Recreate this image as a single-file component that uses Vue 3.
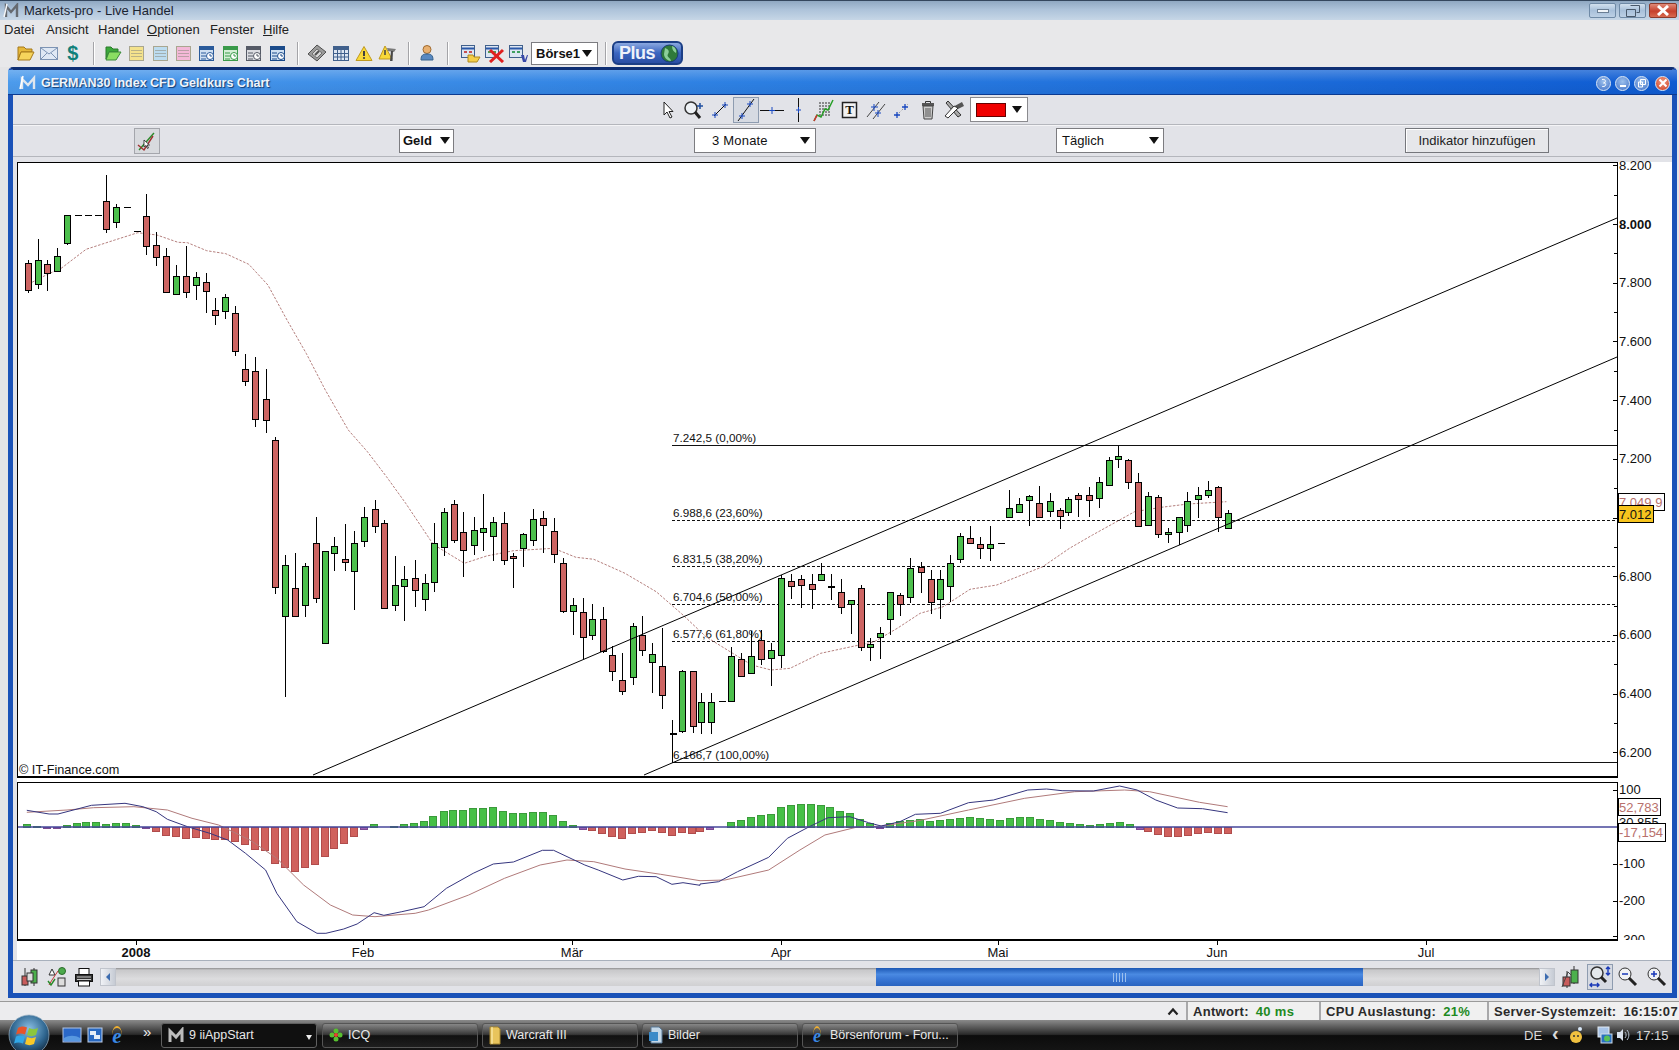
<script setup>
const c5 = [[72,300,310,391,398,0],[98,238,301,373,386,1],[124,300,313,340,392,0],[150,265,287,334,336,1],[176,165,166,250,254,1],[278,45,124,208,218,0],[304,133,142,187,203,1],[382,102,169,259,284,0],[408,216,256,290,317,0],[435,265,289,395,397,0],[461,316,349,401,403,1],[487,258,349,397,413,0],[513,336,352,374,419,1],[537,340,367,394,459,0],[563,415,451,466,494,0],[589,403,412,454,476,1],[615,438,460,572,587,0],[641,582,628,664,677,0],[667,592,634,778,800,0],[694,628,718,781,818,0]]
const c6 = [[617,-130,-119,320,341,0],[639,226,256,409,650,1],[661,220,325,409,409,0],[684,248,259,376,412,1],[707,112,190,355,368,0],[729,213,214,488,490,1],[749,170,199,220,272,1],[772,133,238,245,272,0],[794,153,190,274,390,1],[816,80,112,184,200,1],[839,60,88,139,158,0],[861,121,130,383,386,0],[884,228,314,376,392,1],[906,258,298,319,422,1],[929,240,293,331,380,0],[951,282,310,358,393,1],[973,128,190,307,335,1],[995,85,97,202,227,1],[1016,60,71,181,188,0],[1038,96,157,211,290,0],[1061,112,149,196,224,1],[1083,42,143,157,212,1],[1105,112,127,169,242,1],[1128,97,130,241,254,0],[1150,220,229,235,323,0],[1172,158,163,205,260,1],[1195,87,118,181,197,1],[1217,93,115,136,218,0],[1240,115,154,222,248,0],[1262,234,248,394,400,0],[1283,354,374,394,465,1],[1305,354,395,472,537,0],[1327,372,416,466,480,1],[1350,381,416,514,520,0],[1372,498,526,574,602,0],[1394,518,599,634,644,0],[1417,430,439,592,614,1],[1439,408,466,511,528,0],[1461,490,523,547,640,1],[1484,445,557,646,686,0]]
const c7 = [[58,751,754,934,940,1],[85,754,754,919,940,0],[108,820,845,905,942,1],[134,820,845,905,942,1],[186,682,707,844,846,1],[212,700,716,769,770,0],[238,632,707,760,762,1],[265,630,659,718,734,0],[291,668,691,715,797,1],[317,466,475,706,745,1],[343,462,482,499,537,0],[369,466,476,496,563,0],[396,462,493,508,566,0],[420,430,463,479,482,1],[446,462,497,502,540,1],[472,478,515,562,582,0],[498,540,541,553,642,1],[524,495,505,682,692,0],[550,655,673,682,722,1],[576,622,638,652,716,1],[602,515,517,598,644,1],[628,518,524,553,587,0],[654,415,445,532,550,1],[681,427,440,457,518,0],[707,450,478,547,581,0],[731,450,478,538,596,1],[757,405,428,499,545,1],[783,340,349,418,428,1],[809,318,355,368,370,0],[835,352,371,385,418,0],[861,318,371,385,422,1],[913,210,263,292,293,1],[939,235,253,277,280,1],[965,224,229,241,318,1],[991,198,250,290,292,0],[1018,220,244,274,290,1],[1044,265,271,289,326,0],[1067,232,238,277,287,1],[1093,220,226,238,290,0],[1120,202,226,241,291,0],[1146,172,187,235,263,1],[1172,110,121,196,197,1],[1198,78,109,118,143,1],[1224,118,121,187,207,0],[1250,160,187,319,322,0],[1276,217,229,316,317,1],[1302,225,232,343,355,0],[1328,325,337,343,368,1],[1355,290,292,337,376,1],[1378,217,244,316,335,1],[1405,202,226,238,293,1],[1431,183,211,226,233,1],[1457,197,202,292,335,0],[1483,271,280,323,325,1]]
const toCandle = (f, x0, y0) => ([x, h, t, b, l, g]) => ({
  x: Math.round(x0 + x / f) + 0.5,
  h: Math.round(y0 + h / 3),
  t: Math.round(y0 + t / 3) + 0.5,
  b: Math.round(y0 + b / 3) + 0.5,
  l: Math.round(y0 + l / 3),
  fill: g ? '#4cbf4c' : '#cd6563'
})
const candles = [
  ...c5.map(toCandle(2.613, 0, 160)),
  ...c6.map(toCandle(2.24, 0, 480)),
  ...c7.map(toCandle(2.613, 660, 420))
]
const dashes = [[77.5, 215], [87.5, 215], [97.5, 215], [126.5, 207], [136.5, 231], [721.5, 701], [1000.5, 543]]
  .map(([x, y]) => ({ x, y: y + 0.5 }))
const wick = { x: 672.5, y1: 720, y2: 763, y: 733.5 }

const toPts = (pts, f, x0, y0) => pts.map(([x, y]) => `${(x0 + x / f).toFixed(1)},${(y0 + y / 3).toFixed(1)}`).join(' ')
const maLine = [
  toPts([[75,372],[124,343],[160,325],[225,268],[300,240],[360,218],[410,225],[465,247],[490,248],[540,272],[590,281],[650,313],[700,375],[750,480],[800,580],[850,690],[910,810],[960,875],[1010,950],[1060,1030],[1130,1150]], 2.613, 0, 160),
  toPts([[985,205],[1040,250],[1090,228],[1150,212],[1240,205],[1290,232],[1330,238],[1400,280],[1470,335]], 2.24, 0, 480),
  toPts([[60,585],[120,650],[190,700],[240,735],[290,750],[340,745],[420,700],[500,680],[560,665],[620,625],[680,580],[740,560],[810,508],[880,495],[1000,440],[1070,385],[1130,345],[1240,275],[1310,262],[1380,252],[1480,245]], 2.613, 660, 420)
].join(' ')

const macd = [
  toPts([[60,121],[110,132],[130,132],[205,106],[280,100],[320,110],[350,125],[375,148],[420,170],[470,190],[510,210],[550,250],[595,300],[620,370],[665,455],[710,490],[730,490],[770,477],[800,462],[838,428],[860,436],[900,425],[950,410],[1000,355],[1060,310],[1105,282],[1150,276],[1215,241],[1240,241],[1310,285],[1340,300],[1395,330],[1430,319],[1470,320],[1505,343],[1530,338],[1568,346]], 2.24, 0, 770),
  toPts([[0,342],[30,335],[60,305],[110,262],[140,205],[175,170],[205,143],[240,140],[270,158],[290,168],[320,155],[345,133],[385,130],[430,98],[470,90],[525,60],[555,57],[580,62],[630,63],[672,48],[700,60],[730,90],[765,114],[805,116],[845,128]], 1.6016, 700, 770)
].join(' ')
const signal = [
  toPts([[60,127],[150,120],[210,113],[300,110],[375,120],[430,145],[490,165],[560,210],[620,265],[680,345],[740,405],[790,435],[840,440],[930,430],[960,420],[1050,375],[1130,325],[1210,285],[1270,270],[1330,275],[1400,297],[1480,313],[1568,332]], 2.24, 0, 770),
  toPts([[0,332],[40,330],[110,300],[160,240],[200,195],[250,172],[290,168],[350,152],[430,120],[520,85],[600,65],[680,60],[720,65],[800,97],[845,110]], 1.6016, 700, 770)
].join(' ')

const b9 = [[60,160],[83,166],[105,172],[128,172],[150,163],[172,157],[193,154],[215,154],[237,160],[259,157],[282,157],[304,163],[327,172],[349,182],[372,194],[394,197],[417,203],[439,200],[461,203],[482,206],[505,205],[527,212],[549,221],[571,236],[593,239],[616,278],[638,290],[660,302],[683,290],[705,281],[728,257],[748,233],[771,218],[793,197],[815,176],[838,160],[883,167],[905,160],[927,157],[949,151],[971,136],[995,121],[1015,118],[1037,118],[1060,112],[1083,112],[1104,109],[1127,121],[1149,127],[1171,127],[1194,124],[1216,124],[1238,133],[1261,151],[1283,163],[1305,176],[1327,179],[1349,188],[1371,197],[1393,203],[1415,188],[1438,185],[1460,179],[1482,185],[1505,194],[1527,185],[1549,188]]
const b10 = [[0,182],[16,176],[49,154],[65,148],[81,139],[97,133],[113,130],[129,109],[145,103],[161,100],[177,100],[193,103],[208,109],[224,121],[240,127],[256,145],[272,157],[288,172],[304,157],[320,151],[336,148],[352,145],[368,151],[384,148],[400,145],[416,142],[432,139],[448,142],[464,145],[480,148],[496,142],[512,139],[528,139],[544,145],[560,148],[576,154],[592,157],[608,160],[624,163],[640,160],[656,157],[672,154],[688,160],[704,176],[718,182],[734,191],[750,197],[766,197],[782,194],[797,188],[813,185],[829,188],[845,188]]
const toBar = (f, x0) => ([x, z]) => {
  const d = 170 - z
  const h = Math.max(1, Math.round(Math.abs(d) / 3))
  const small = Math.abs(d) <= 2.5 || (d < 0 && h <= 2)
  return {
    x: Math.round(x0 + x / f) - 3.5,
    y: d >= 0 ? 827 - h + 0.5 : 827.5,
    h,
    fill: small ? '#9a5fb0' : d >= 0 ? '#46c046' : '#d0615d',
    stroke: small ? '#7a4a90' : d >= 0 ? '#3b9a3b' : '#b04c4c'
  }
}
const bars = [...b9.map(toBar(2.24, 0)), ...b10.map(toBar(1.6016, 700))]

const fibs = [
  { y: 445.5, label: '7.242,5 (0,00%)', solid: true },
  { y: 520.5, label: '6.988,6 (23,60%)' },
  { y: 566.5, label: '6.831,5 (38,20%)' },
  { y: 604.5, label: '6.704,6 (50,00%)' },
  { y: 641.5, label: '6.577,6 (61,80%)' },
  { y: 762.5, label: '6.166,7 (100,00%)', solid: true }
]
const prices = ['8.200','8.000','7.800','7.600','7.400','7.200','7.000','6.800','6.600','6.400','6.200'].map((t, i) => ({ t, y: 165.8 + i * 58.7 }))
const minor = Array.from({ length: 10 }, (_, i) => 195.2 + i * 58.7)
const months = [['2008',136],['Feb',363],['Mär',572],['Apr',781],['Mai',998],['Jun',1217],['Jul',1426]]
const indic = [['100',790,4],['-100',864,4],['-200',901,4],['-300',936,8]]
const menus = [
  { t: 'Datei', w: 42 }, { t: 'Ansicht', w: 52 }, { t: 'Handel', w: 49 },
  { u: 'O', t: 'ptionen', w: 63 }, { t: 'Fenster', w: 53 }, { u: 'H', t: 'ilfe', w: 30 }
]
const sheets = ['#f4e28c', '#bcdcf0', '#f4b8d8']
const clockDocs = [['#2a5a9a','#cfe0f2'],['#3a9a4a','#d4efd6'],['#555a66','#dcdde2'],['#1a4a8a','#cfe0f2']]
const tasks = [
  { t: 'ICQ', k: 'icq' }, { t: 'Warcraft III', k: 'folder' }, { t: 'Bilder', k: 'doc' }, { t: 'Börsenforum - Foru...', k: 'ie' }
]
</script>

<template>
  <div class="app">
    <header class="title">
      <svg class="mlogo" width="18" height="16" viewBox="0 0 18 16"><path d="M3 14V3l5 6 6-7v12" fill="none" stroke="#666a70" stroke-width="2.4"/><path d="M1 14 4 1" stroke="#f4f6f8" stroke-width="1.5"/></svg>
      <span class="title-text">Markets-pro - Live Handel</span>
      <div class="winbtns">
        <div class="wb"><i class="min"></i></div>
        <div class="wb">
          <svg width="14" height="12" viewBox="0 0 14 12"><path d="M4.5.5h9v7h-3M.5 4.5h9v7h-9z" fill="none" stroke="#48586a"/></svg>
        </div>
        <div class="wb close">
          <svg width="14" height="11" viewBox="0 0 14 11"><path d="M2 1l10 9M12 1 2 10" stroke="#fff" stroke-width="3"/></svg>
        </div>
      </div>
    </header>

    <nav class="menu">
      <span v-for="m in menus" :key="m.t" class="mi" :style="{ width: m.w + 'px' }"><u v-if="m.u">{{ m.u }}</u>{{ m.t }}</span>
    </nav>

    <div class="toolbar">
      <span class="tb"><svg width="20" height="18" viewBox="0 0 20 18"><path d="M2 3h6l2 2h6v3H5L2 16z" fill="#e6b83a" stroke="#a5781a"/><path d="M5 8h13l-4 8H2z" fill="#f6d45c" stroke="#a5781a"/></svg></span>
      <span class="tb"><svg width="20" height="15" viewBox="0 0 20 15"><rect x="1.500" y="1.500" width="17" height="12" fill="#dfe8f4" stroke="#7d94b4"/><path d="M2 2l8 6 8-6M2 13l6-6M18 13l-6-6" fill="none" stroke="#7d94b4"/></svg></span>
      <span class="tb dollar">$</span>
      <i class="sep"></i>

      <span class="tb"><svg width="18" height="18" viewBox="0 0 18 18"><path d="M2 3h5l2 2h5v3H5L2 15z" fill="#3aa83a" stroke="#2a7a2a"/><path d="M5 8h12l-5 8H2z" fill="#8ade62" stroke="#3a8a3a"/></svg></span>
      <span v-for="c in sheets" :key="c" class="tb">
        <svg width="17" height="17" viewBox="0 0 17 17"><rect x="1.500" y="1.500" width="14" height="14" :fill="c" stroke="#a9a690"/><path d="M3 5.500h11M3 8.500h11M3 11.500h11" stroke="#8a8a80" stroke-opacity=".55"/></svg>
      </span>
      <span v-for="d in clockDocs" :key="d[0]" class="tb">
        <svg width="18" height="17" viewBox="0 0 18 17"><rect x="1.500" y="1.500" width="14" height="14" :fill="d[1]" :stroke="d[0]"/><rect x="2" y="2" width="13" height="3" :fill="d[0]"/><path d="M3 8h5M3 11h5M3 14h5" :stroke="d[0]"/><circle cx="12" cy="11" r="3.500" fill="#fff" :stroke="d[0]"/><path d="M12 9v2h2" fill="none" :stroke="d[0]"/></svg>
      </span>
      <i class="sep s2"></i>

      <span class="tb"><svg width="22" height="20" viewBox="0 0 22 20"><path d="M2 11 11 2l9 7-9 9z" fill="#9a9a9a" stroke="#505050"/><path d="M6 11l5-5 5 4-5 5z" fill="#d8d8d8" stroke="#707070"/><path d="M9 12l4-4" stroke="#505050" stroke-width="2"/></svg></span>
      <span class="tb"><svg width="18" height="17" viewBox="0 0 18 17"><rect x="1.500" y="1.500" width="15" height="14" fill="#dde6f2" stroke="#40608c"/><rect x="2" y="2" width="14" height="3" fill="#40608c"/><path d="M5.500 5v10M9 5v10M12.500 5v10M2 8.500h14M2 12h14" stroke="#40608c"/></svg></span>
      <span class="tb"><svg width="18" height="17" viewBox="0 0 18 17"><path d="M9 1.500 17 15.500H1z" fill="#f8d838" stroke="#c09a20"/><path d="M9 6v5" stroke="#404040" stroke-width="2"/><circle cx="9" cy="13" r="1.100" fill="#404040"/></svg></span>
      <span class="tb"><svg width="20" height="18" viewBox="0 0 20 18"><path d="M7 2 14 15H1z" fill="#f8d838" stroke="#c09a20"/><path d="M7 6v5" stroke="#404040" stroke-width="1.500"/><path d="M9 4l9 1-2 3-6-1z" fill="#7a7a7a"/><path d="M13 7l-1 10h2.500l.5-10z" fill="#484848"/></svg></span>
      <i class="sep s3"></i>

      <span class="tb"><svg width="16" height="18" viewBox="0 0 16 18"><circle cx="8" cy="5.500" r="4" fill="#e8b070" stroke="#a06a30"/><path d="M2 16c0-5 2-6 6-6s6 1 6 6z" fill="#5888c0" stroke="#34608c"/></svg></span>
      <i class="sep s4"></i>

      <span class="tb t3"><svg width="21" height="19" viewBox="0 0 21 19"><rect x="1.500" y="1.500" width="13" height="12" fill="#dde6f2" stroke="#40608c"/><path d="M2 4.500h12" stroke="#2a58a8" stroke-width="2"/><path d="M4 7h3v2H4zM9 7h3v2H9z" fill="#c85050"/><path d="M8 11h5l1 2h6l-3 5H8z" fill="#f4ce48" stroke="#b08a20"/></svg></span>
      <span class="tb t3"><svg width="21" height="19" viewBox="0 0 21 19"><rect x="1.500" y="1.500" width="13" height="12" fill="#dde6f2" stroke="#40608c"/><path d="M2 4.500h12" stroke="#2a58a8" stroke-width="2"/><path d="M4 7h3v2H4zM9 7h3v2H9z" fill="#50a050"/><path d="M6 6l13 12M19 6 6 18" stroke="#e02020" stroke-width="3"/></svg></span>
      <span class="tb t3"><svg width="21" height="19" viewBox="0 0 21 19"><rect x="1.500" y="1.500" width="13" height="12" fill="#dde6f2" stroke="#40608c"/><path d="M2 4.500h12" stroke="#2a58a8" stroke-width="2"/><path d="M4 7h3v2H4zM9 7h3v2H9z" fill="#40a060"/><path d="M13 11h3l1 5 2-5h1l-2 7h-3z" fill="#3848a8"/></svg></span>
      <div class="sel borse"><span>Börse1</span><i class="tri"></i></div>
      <i class="sep s5"></i>
      <div class="plus">
        <span>Plus</span>
        <svg width="19" height="19" viewBox="0 0 19 19"><circle cx="9.500" cy="9.500" r="8.500" fill="#2f7a3a" stroke="#1a3e74"/><path d="M5 4c3 1 5 3 3 6s3 4 3 7c-3 0-7-3-7-7zM12 2c3 1 5 4 4 7-2-1-4-3-4-7z" fill="#8ccf9a"/></svg>
      </div>
    </div>

    <main class="mdi">
      <section class="window">
        <div class="wtitle">
          <svg class="wlogo" width="20" height="16" viewBox="0 0 20 16"><path d="M4 14V4l6 6 6-7v11" fill="none" stroke="#dfe6ee" stroke-width="2.400"/><path d="M2 14 5 1" stroke="#fff" stroke-width="1.500"/></svg>
          <span class="wtext">GERMAN30 Index CFD Geldkurs Chart</span>
          <div class="wctrls">
            <i class="dot"><svg width="10" height="10" viewBox="0 0 10 10"><path d="M3 1.500c3-.5 4 1 3 3L4.500 5c2 0 3 1 1.500 3-1 .8-3 .5-3 .5" fill="none" stroke="#fff"/></svg></i>
            <i class="dot"><svg width="10" height="10" viewBox="0 0 10 10"><path d="M2 8h6" stroke="#fff" stroke-width="2"/></svg></i>
            <i class="dot"><svg width="10" height="10" viewBox="0 0 10 10"><path d="M3.500 1.500h5v5h-5zM1.500 4h4v5h-4z" fill="none" stroke="#fff"/></svg></i>
            <i class="dot red"><svg width="10" height="10" viewBox="0 0 10 10"><path d="M1.500 1.500l7 7M8.500 1.500l-7 7" stroke="#fff" stroke-width="2"/></svg></i>
          </div>
        </div>

        <div class="drawbar">
          <span class="dt"><svg width="14" height="18" viewBox="0 0 14 18"><path d="M3 1v13l3-3 3 6 2-1-3-5.500h4z" fill="#fff" stroke="#222"/></svg></span>
          <span class="dt"><svg width="22" height="20" viewBox="0 0 22 20"><circle cx="8" cy="8" r="6" fill="#eef2f6" stroke="#333" stroke-width="1.500"/><path d="M12 12l5 6" stroke="#222" stroke-width="3"/><path d="M17 3v6M14 6h6" stroke="#2050a0" stroke-width="1.500"/></svg></span>
          <span class="dt"><svg width="18" height="18" viewBox="0 0 18 18"><path d="M3 15 15 3" stroke="#111"/><path d="M4 11v6M1 14h6M14 1v6M11 4h6" stroke="#1848c0"/></svg></span>
          <span class="dt on"><svg width="20" height="24" viewBox="0 0 20 24"><path d="M2 23 18 1" stroke="#111"/><path d="M6 15v6M3 18h6M14 3v6M11 6h6" stroke="#1848c0"/></svg></span>
          <span class="dt"><svg width="24" height="12" viewBox="0 0 24 12"><path d="M0 6.500h24" stroke="#111"/><path d="M12 3v7M9 6.500h6" stroke="#1848c0"/></svg></span>
          <span class="dt"><svg width="12" height="24" viewBox="0 0 12 24"><path d="M6.500 0v24" stroke="#111"/><path d="M6.500 9v6M4 12h5" stroke="#1848c0"/></svg></span>
          <span class="dt"><svg width="22" height="24" viewBox="0 0 22 24"><path d="M6 5h12M6 8h12M6 11h12M6 14h12M6 17h12" stroke="#333" stroke-dasharray="2 1"/><path d="M1 23l3-6 4 2 4-8 3 1 5-10" fill="none" stroke="#28a028" stroke-width="1.500"/><path d="M1 23l3-6" stroke="#d03030" stroke-width="1.500"/></svg></span>
          <span class="dt"><svg width="18" height="18" viewBox="0 0 18 18"><rect x="1.500" y="1.500" width="14" height="15" fill="#f2f2f2" stroke="#222" stroke-width="1.500"/><text x="8.500" y="13" class="ticon" text-anchor="middle">T</text></svg></span>
          <span class="dt"><svg width="20" height="20" viewBox="0 0 20 20"><path d="M1 17 13 2M7 19 19 4" stroke="#444"/><path d="M8 4v7M5 7h7M12 10v7M9 13h6" stroke="#1848c0"/></svg></span>
          <span class="dt"><svg width="18" height="18" viewBox="0 0 18 18"><path d="M3 15 15 3" stroke="#999" stroke-dasharray="2 2"/><path d="M4 11v6M1 14h6M12 3v6M9 6h6" stroke="#1848c0" stroke-width="1.300"/></svg></span>
          <span class="dt"><svg width="16" height="20" viewBox="0 0 16 20"><path d="M5.500 3V1.500h5V3" fill="none" stroke="#333"/><rect x="2" y="3" width="12" height="3" fill="#555"/><path d="M3 6h10l-1 13H4z" fill="#ccc" stroke="#444"/><path d="M6 8v9M8 8v9M10 8v9" stroke="#555"/></svg></span>
          <span class="dt"><svg width="22" height="20" viewBox="0 0 22 20"><path d="M3 3l12 14 3-2L5 1z" fill="#aaa" stroke="#333"/><path d="M8 8l11-6 2 4-10 5z" fill="#555"/><path d="M15 8 5 18l-3-2 9-10z" fill="#fff" stroke="#333"/></svg></span>
          <div class="colorsel"><i class="swatch"></i><i class="tri"></i></div>
        </div>

        <div class="optbar">
          <button class="iconbtn">
            <svg width="22" height="22" viewBox="0 0 22 22"><path d="M3 20 18 3" stroke="#2a8a2a" stroke-width="1.400"/><path d="M2 15l6 5 9-14" fill="none" stroke="#a03030" stroke-width="1.400"/><path d="M8 10v7l2-1.500 1.500 3 1-.5-1.500-3h2.500z" fill="#fff" stroke="#222" stroke-width=".8"/></svg>
          </button>
          <div class="sel geld"><span>Geld</span><i class="tri"></i></div>
          <div class="sel monate"><span>3 Monate</span><i class="tri"></i></div>
          <div class="sel taeg"><span>Täglich</span><i class="tri"></i></div>
          <button class="addbtn">Indikator hinzufügen</button>
        </div>

        <div class="chartwrap">
          <svg class="chart" width="1655" height="798" viewBox="17 162 1655 798">
            <rect x="17" y="162" width="1655" height="798" fill="#fff"/>

            <!-- fibonacci -->
            <g v-for="f in fibs" :key="f.y">
              <line x1="672" x2="1617" :y1="f.y" :y2="f.y" stroke="#111" :stroke-dasharray="f.solid ? null : '3 2'"/>
              <text x="673" :y="f.y - 3.500" class="lbl fib">{{ f.label }}</text>
            </g>

            <!-- moving average -->
            <polyline :points="maLine" fill="none" stroke="#b5807e" stroke-dasharray="2.500 1.500"/>

            <!-- candles -->
            <g shape-rendering="crispEdges">
              <g v-for="(c, i) in candles" :key="i">
                <line :x1="c.x" :x2="c.x" :y1="c.h" :y2="c.l" stroke="#000"/>
                <rect :x="c.x - 3" :y="c.t" width="6" :height="c.b - c.t" :fill="c.fill" stroke="#000"/>
              </g>
              <line v-for="(d, i) in dashes" :key="'d' + i" :x1="d.x - 3" :x2="d.x + 4" :y1="d.y" :y2="d.y" stroke="#000" stroke-width="1"/>
              <line :x1="wick.x" :x2="wick.x" :y1="wick.y1" :y2="wick.y2" stroke="#000"/>
              <line :x1="wick.x - 3" :x2="wick.x + 4" :y1="wick.y" :y2="wick.y" stroke="#000" stroke-width="2"/>
            </g>

            <!-- trend channel -->
            <line x1="313" y1="775" x2="1617" y2="218" stroke="#000" stroke-width="1"/>
            <line x1="644" y1="775" x2="1617" y2="357" stroke="#000" stroke-width="1"/>

            <!-- price axis -->
            <g shape-rendering="crispEdges">
              <line v-for="p in prices" :key="p.t" x1="1613" x2="1617" :y1="p.y" :y2="p.y" stroke="#000"/>
              <line v-for="m in minor" :key="m" x1="1614" x2="1617" :y1="m" :y2="m" stroke="#000"/>
            </g>
            <text v-for="p in prices" :key="'t' + p.t" x="1619" :y="p.y + 4" class="lbl axis" :class="{ strong: p.t === '8.000' }">{{ p.t }}</text>

            <text x="19" y="774" class="lbl copy">© IT-Finance.com</text>

            <rect x="1618" y="493.500" width="46" height="17" fill="#fff" stroke="#000" shape-rendering="crispEdges"/>
            <text x="1619" y="507" class="lbl axis pink">7.049,9</text>
            <rect x="1618" y="505.500" width="35" height="17" fill="#f7c41e" stroke="#000" shape-rendering="crispEdges"/>
            <text x="1619" y="519" class="lbl axis">7.012</text>

            <!-- chart frames -->
            <g fill="none" stroke="#000" shape-rendering="crispEdges">
              <path d="M17.500 776V162.500H1617" stroke-width="1"/>
              <path d="M17 776.500H1618" stroke-width="2"/>
              <path d="M1617.500 162V777" stroke-width="1"/>
            </g>

            <!-- indicator -->
            <g shape-rendering="crispEdges">
              <rect v-for="(b, i) in bars" :key="'b' + i" :x="b.x" :y="b.y" width="7" :height="b.h" :fill="b.fill" :stroke="b.stroke"/>
            </g>
            <polyline :points="signal" fill="none" stroke="#b07a7a" stroke-width="1"/>
            <polyline :points="macd" fill="none" stroke="#35357e" stroke-width="1"/>
            <line x1="18" x2="1617" y1="827" y2="827" stroke="#46469a" stroke-width="1.500"/>

            <line v-for="t in indic" :key="t[0]" x1="1613" x2="1617" :y1="t[1]" :y2="t[1]" stroke="#000" shape-rendering="crispEdges"/>
            <text v-for="t in indic" :key="'i' + t[0]" x="1619" :y="t[1] + t[2]" class="lbl axis">{{ t[0] }}</text>
            <rect x="1618" y="940" width="54" height="20" fill="#fff"/>
            <g shape-rendering="crispEdges" fill="none" stroke="#000">
              <path d="M17.500 939V782.500H1617.500V939"/>
              <path d="M17 939.500H1618" stroke-width="2"/>
            </g>
            <text x="1619" y="827" class="lbl axis">30,855</text>
            <rect x="1618" y="798.500" width="42" height="17" fill="#fff" stroke="#000" shape-rendering="crispEdges"/>
            <text x="1619" y="812" class="lbl axis pink">52,783</text>
            <rect x="1618" y="823.500" width="47" height="18" fill="#fff" stroke="#000" shape-rendering="crispEdges"/>
            <text x="1619" y="837" class="lbl axis pink">-17,154</text>

            <!-- time axis -->
            <g v-for="m in months" :key="m[0]">
              <line :x1="m[1] + .5" :x2="m[1] + .5" y1="940" y2="945" stroke="#000" shape-rendering="crispEdges"/>
              <text :x="m[1]" y="957" text-anchor="middle" class="lbl axis" :class="{ strong: m[0] === '2008' }">{{ m[0] }}</text>
            </g>
          </svg>
        </div>

        <div class="scrollrow">
          <span class="sc"><svg width="20" height="20" viewBox="0 0 20 20"><path d="M5 1v18M14 1v18" stroke="#333"/><rect x="2" y="9" width="6" height="9" fill="#c85c5c" stroke="#333"/><rect x="11" y="3" width="6" height="13" fill="#4cb04c" stroke="#333"/><rect x="7" y="6" width="6" height="8" fill="#ddd" stroke="#333"/></svg></span>
          <span class="sc"><svg width="22" height="22" viewBox="0 0 22 22"><path d="M3 9l3-6 3 6z" fill="#fff" stroke="#333"/><circle cx="16" cy="5" r="3.500" fill="#4caa4c" stroke="#2a6a2a"/><path d="M3 19l3-5 6-9" fill="none" stroke="#c83a3a"/><path d="M2 15l3 4 4-6" fill="none" stroke="#2a8a2a" stroke-width="1.400"/><rect x="12" y="12" width="7" height="8" fill="#ddd" stroke="#333"/></svg></span>
          <span class="sc"><svg width="20" height="20" viewBox="0 0 20 20"><rect x="5" y="1.500" width="10" height="6" fill="#fff" stroke="#111"/><rect x="1.500" y="7.500" width="17" height="7" fill="#333" stroke="#111"/><path d="M3 10h14M3 12.500h14" stroke="#ccc"/><rect x="4.500" y="14" width="11" height="5" fill="#fff" stroke="#111"/></svg></span>
          <div class="scrollbar">
            <div class="sbtn"><i class="tl"></i></div>
            <div class="track left"></div>
            <div class="thumb"><i class="grip"></i></div>
            <div class="track right"></div>
            <div class="sbtn"><i class="tr"></i></div>
          </div>
          <span class="sc r1"><svg width="22" height="24" viewBox="0 0 22 24"><path d="M8 6v17M15 1v18" stroke="#333"/><rect x="4" y="12" width="7" height="9" fill="#c85c5c" stroke="#333"/><rect x="12" y="5" width="7" height="13" fill="#4cb04c" stroke="#333"/><path d="M3 22 9 7l3 3" fill="none" stroke="#444"/></svg></span>
          <span class="sc on"><svg width="24" height="24" viewBox="0 0 24 24"><circle cx="9" cy="8" r="6" fill="#e4e8ec" stroke="#333" stroke-width="1.500"/><path d="M13 12l5 5" stroke="#222" stroke-width="3"/><path d="M20 2v8M18 4l2-2 2 2M18 8l2 2 2-2M2 20h9M4 18l-2 2 2 2M9 18l2 2-2 2" fill="none" stroke="#1838b8" stroke-width="1.400"/></svg></span>
          <span class="sc z"><svg width="22" height="22" viewBox="0 0 22 22"><circle cx="8" cy="8" r="6" fill="#f0f2f4" stroke="#333"/><path d="M5 8h6" stroke="#1838b8" stroke-width="1.500"/><path d="M12 12l7 7" stroke="#222" stroke-width="3"/></svg></span>
          <span class="sc z"><svg width="22" height="22" viewBox="0 0 22 22"><circle cx="8" cy="8" r="6" fill="#f0f2f4" stroke="#333"/><path d="M5 8h6M8 5v6" stroke="#1838b8" stroke-width="1.500"/><path d="M12 12l7 7" stroke="#222" stroke-width="3"/></svg></span>
        </div>
      </section>
    </main>

    <footer class="status">
      <svg class="chev" width="12" height="9" viewBox="0 0 12 9"><path d="M1.500 7.500 6 2.500l4.500 5" fill="none" stroke="#222" stroke-width="2.200"/></svg>
      <div class="stbox a"><b>Antwort:</b><b class="grn">40 ms</b></div>
      <div class="stbox c"><b>CPU Auslastung:</b><b class="grn">21%</b></div>
      <div class="stbox s"><b>Server-Systemzeit:</b><b>16:15:07</b></div>
    </footer>

    <div class="taskbar">
      <svg class="orb" width="44" height="44" viewBox="0 0 44 44">
        <defs>
          <radialGradient id="orbg" cx=".5" cy=".35" r=".7"><stop offset="0" stop-color="#8cc0e4"/><stop offset=".6" stop-color="#2f6690"/><stop offset="1" stop-color="#0e2236"/></radialGradient>
        </defs>
        <circle cx="22" cy="22" r="20" fill="url(#orbg)" stroke="#9ab2c4" stroke-opacity=".7"/>
        <path d="M11 15c3-2 6-2 9-.5l-2 7c-3-1.500-6-1.500-9 0z" fill="#e8542a"/>
        <path d="M22 15c3 1.500 6 1.500 9 0l-2 7c-3 1.500-6 1.500-9 0z" fill="#8cc63e"/>
        <path d="M9 23.500c3-1.500 6-1.500 9 0l-2 7c-3-1.500-6-1.500-9 0z" fill="#30a8e8"/>
        <path d="M20 24c3 1.500 6 1.500 9 0l-2 7c-3 1.500-6 1.500-9 0z" fill="#f8c828"/>
      </svg>
      <div class="ql">
        <svg width="20" height="16" viewBox="0 0 20 16"><rect x="1" y="1" width="18" height="14" fill="#2a68c8" stroke="#b0c4e4"/><path d="M2 11c5-3 11-3 16 0v3H2z" fill="#5898e0"/></svg>
        <svg width="16" height="16" viewBox="0 0 16 16"><rect x="1" y="1" width="14" height="14" fill="#2868c0" stroke="#c0d0e8"/><rect x="3" y="4" width="6" height="4" fill="#e4ecf6"/><rect x="7" y="8" width="6" height="4" fill="#e4ecf6"/></svg>
        <span class="ie"><i>e</i></span>
        <span class="more">»</span>
      </div>
      <button class="task active">
        <svg width="18" height="16" viewBox="0 0 18 16"><path d="M3 15V4l6 6 6-7v12" fill="none" stroke="#bcbcbc" stroke-width="3"/></svg>
        <span>9 iiAppStart</span>
        <i class="ttri"></i>
      </button>
      <button v-for="t in tasks" :key="t.t" class="task">
        <svg v-if="t.k === 'icq'" width="16" height="16" viewBox="0 0 16 16"><circle cx="8" cy="4" r="2.500" fill="#58c030"/><circle cx="12" cy="8" r="2.500" fill="#58c030"/><circle cx="4" cy="8" r="2.500" fill="#58c030"/><circle cx="8" cy="12" r="2.500" fill="#58c030"/><circle cx="8" cy="8" r="2" fill="#e84030"/></svg>
        <svg v-else-if="t.k === 'folder'" width="14" height="20" viewBox="0 0 14 20"><path d="M2 2h8l2 2v15H2z" fill="#e8c45c" stroke="#a88830"/><path d="M4 2v17" stroke="#fff4c0"/></svg>
        <svg v-else-if="t.k === 'doc'" width="16" height="18" viewBox="0 0 16 18"><path d="M3 1h8l3 3v13H3z" fill="#c4d8e8" stroke="#5a7a98"/><rect x="1" y="6" width="9" height="9" fill="#3a8ac8"/></svg>
        <span v-else class="ie small"><i>e</i></span>
        <span>{{ t.t }}</span>
      </button>
      <div class="tray">
        <span class="de">DE</span>
        <span class="tchev">‹</span>
        <svg class="t-sm" width="16" height="18" viewBox="0 0 16 18"><circle cx="8" cy="11" r="6" fill="#f0c040"/><circle cx="6" cy="10" r="1" fill="#333"/><circle cx="10" cy="10" r="1" fill="#333"/><circle cx="12" cy="3" r="2" fill="#d8e8f8"/></svg>
        <svg class="t-net" width="18" height="18" viewBox="0 0 18 18"><rect x="2" y="1" width="11" height="10" fill="#a8c4e8" stroke="#e4ecf4"/><rect x="5" y="8" width="11" height="9" fill="#2870c0" stroke="#d0dce8"/><circle cx="11" cy="12.500" r="3" fill="#58c058"/></svg>
        <svg width="14" height="16" viewBox="0 0 14 16"><path d="M1 5h3l3-3v12l-3-3H1z" fill="#d8e0ec"/><path d="M9 5c1.500 2 1.500 4 0 6M11 3c2.500 3 2.500 7 0 10" fill="none" stroke="#b8c4d4"/></svg>
        <span class="clock">17:15</span>
      </div>
    </div>
  </div>
</template>

<style scoped>
.app {
  width: 1679px;
  height: 1050px;
  display: flex;
  flex-direction: column;
  overflow: hidden;
  background: #ebebed;
  font-family: "Liberation Sans", Arial, sans-serif;
  font-size: 13px;
  color: #1a1a1a;
}
.title {
  height: 20px;
  flex: none;
  display: flex;
  align-items: center;
  box-sizing: border-box;
  padding-left: 3px;
  border-top: 1px solid #34475e;
  background: linear-gradient(#8fa8c2, #adc3da 45%, #c6d6e6);
}
.title-text { margin-left: 3px; font-size: 13px; color: #1c2430; }
.winbtns { margin-left: auto; margin-right: 2px; display: flex; gap: 3px; }
.wb {
  width: 27px;
  height: 15px;
  box-sizing: border-box;
  border: 1px solid #6f8aa6;
  border-radius: 2px;
  background: linear-gradient(#d2e0ee, #a8c0da 50%, #bcd0e4);
  display: flex;
  align-items: center;
  justify-content: center;
}
.wb .min { width: 12px; height: 4px; background: #f0f4f8; border: 1px solid #6a7e94; box-sizing: border-box; }
.wb.close { width: 28px; background: linear-gradient(#e08a78, #c6402c 55%, #d86a50); border-color: #8a3a2c; }

.menu {
  height: 19px;
  flex: none;
  display: flex;
  align-items: center;
  padding-left: 4px;
  background: #e8e8ea;
}
.mi { font-size: 13px; color: #222; }

.toolbar {
  height: 28px;
  flex: none;
  display: flex;
  align-items: center;
  padding-left: 14px;
  background: #e8e8ea;
}
.tb { width: 23.500px; flex: none; display: flex; justify-content: center; align-items: center; }
.tb.t3 { width: 24px; }
.dollar { font: bold 20px "Liberation Sans", sans-serif; color: #10807a; }
.sep { width: 1px; height: 23px; flex: none; margin: 0 8px; background: #a4a4a8; box-shadow: 1px 0 #fff; }
.sep.s2 { margin-left: 7px; }
.sep.s3 { margin-right: 7px; }
.sep.s4 { margin-right: 10px; }
.sep.s5 { margin: 0 6px 0 7px; }
.sel {
  display: flex;
  align-items: center;
  justify-content: space-between;
  box-sizing: border-box;
  background: #fff;
  border: 1px solid #7c7c80;
  font-size: 13px;
  font-weight: bold;
  color: #111;
  flex: none;
}
.tri {
  display: block;
  width: 0;
  height: 0;
  border-left: 5.500px solid transparent;
  border-right: 5.500px solid transparent;
  border-top: 7px solid #111;
}
.borse { width: 67px; height: 23px; margin-left: 1px; padding: 0 5px 0 4px; }
.plus {
  width: 71px;
  height: 24px;
  flex: none;
  box-sizing: border-box;
  border: 2px solid #1c3f86;
  border-radius: 6px;
  background: linear-gradient(#8aa8e0, #3c66c0 50%, #2a4ea4);
  display: flex;
  align-items: center;
  justify-content: space-between;
  padding: 0 2px 0 5px;
}
.plus span { font: 900 18px "Liberation Sans", sans-serif; color: #eef2fa; letter-spacing: -0.5px; }

.mdi {
  flex: 1;
  min-height: 0;
  box-sizing: border-box;
  padding: 0 2px 3px 8px;
  display: flex;
  background: #e4e4e6;
}
.window {
  flex: 1;
  min-width: 0;
  box-sizing: border-box;
  border: 5px solid #1a52b8;
  border-top: 3px solid #0e2f74;
  border-radius: 5px 5px 0 0;
  background: #e2e3e8;
  display: flex;
  flex-direction: column;
}
.wtitle {
  height: 25px;
  flex: none;
  display: flex;
  align-items: center;
  box-sizing: border-box;
  padding: 2px 7px 0 5px;
  margin: 0 -5px;
  background: linear-gradient(rgba(255,255,255,.22), rgba(255,255,255,0) 50%, rgba(0,0,30,.05)), linear-gradient(90deg, #4c9bec, #2c7fe2 45%, #0f5cd2);
  border-bottom: 1px solid #0c3a90;
}
.wlogo { margin-left: 5px; }
.wtext {
  margin-left: 3px;
  font-size: 12.500px;
  font-weight: bold;
  color: #f0f4fa;
  text-shadow: 1px 1px 1px #123a70;
}
.wctrls { margin-left: auto; display: flex; gap: 4px; align-items: center; }
.dot {
  width: 15px;
  height: 15px;
  border-radius: 50%;
  display: flex;
  align-items: center;
  justify-content: center;
  background: radial-gradient(circle at 50% 35%, #9cc0ec, #4272c8);
  border: 1px solid #dce8f6;
  box-sizing: border-box;
}
.dot.red { background: radial-gradient(circle at 50% 35%, #f09a80, #cc3c20); margin-left: 2px; }

.drawbar {
  height: 29px;
  flex: none;
  display: flex;
  align-items: center;
  padding-left: 642px;
  border-bottom: 1px solid #b4b6bc;
  box-shadow: 0 1px #f4f4f6;
}
.dt { width: 26px; height: 26px; flex: none; display: flex; align-items: center; justify-content: center; box-sizing: border-box; }
.dt.on { border: 1px solid #8e9cb0; background: #d6dae2; }
.colorsel {
  width: 58px;
  height: 25px;
  margin-left: 3px;
  flex: none;
  box-sizing: border-box;
  background: #fff;
  border: 1px solid #8a8a8e;
  display: flex;
  align-items: center;
  gap: 6px;
  padding-left: 5px;
}
.swatch { width: 30px; height: 14px; background: #f00000; border: 1px solid #600; box-sizing: border-box; }

.optbar {
  height: 31px;
  flex: none;
  display: flex;
  align-items: center;
  padding-left: 121px;
  border-bottom: 1px solid #b4b6bc;
}
.iconbtn {
  width: 26px;
  height: 26px;
  box-sizing: border-box;
  padding: 0;
  display: flex;
  align-items: center;
  justify-content: center;
  background: #d8dade;
  border: 1px solid #a4a6ac;
  flex: none;
}
.geld { width: 55px; height: 24px; margin-left: 239px; padding: 0 3px 0 3px; }
.monate { width: 122px; height: 25px; margin-left: 240px; padding: 0 5px 0 17px; font-weight: normal; letter-spacing: 0.2px; }
.taeg { width: 108px; height: 25px; margin-left: 240px; padding: 0 4px 0 5px; font-weight: normal; }
.addbtn {
  width: 144px;
  height: 25px;
  margin-left: 241px;
  flex: none;
  padding: 0;
  box-sizing: border-box;
  font: 13px "Liberation Sans", Arial, sans-serif;
  color: #222;
  background: #e6e7ea;
  border: 1px solid #75777c;
  box-shadow: inset 1px 1px #fff;
}

.chartwrap { flex: none; height: 798px; padding: 5px 0 0 4px; background: #e2e3e8; }
.chart { display: block; overflow: visible; }
.lbl { font-family: "Liberation Sans", Arial, sans-serif; fill: #111; }
.axis { font-size: 13px; }
.strong { font-weight: bold; }
.pink { fill: #b8716c; }
.fib { font-size: 11.700px; }
.copy { font-size: 12.700px; }
.ticon { font: bold 13px "Liberation Serif", serif; fill: #111; }

.scrollrow {
  height: 33px;
  flex: none;
  display: flex;
  align-items: center;
  box-sizing: border-box;
  padding-left: 4px;
  border-top: 1px solid #a8b0bc;
}
.sc { width: 27px; height: 26px; flex: none; display: flex; align-items: center; justify-content: center; box-sizing: border-box; }
.sc:nth-child(1) { margin-left: -1px; }
.sc.r1 { margin-left: 1px; }
.sc.on { border: 1px solid #8e9cb0; background: #d6dae2; width: 26px; margin-left: 4px; }
.sc.z { width: 28px; margin-left: 1px; }
.scrollbar { width: 1455px; height: 18px; margin-left: 3px; flex: none; display: flex; align-items: stretch; }
.sbtn {
  width: 16px;
  flex: none;
  background: linear-gradient(90deg, #f0f2f6, #c6cbd4);
  border: 1px solid #c0c4cc;
  box-sizing: border-box;
  display: flex;
  align-items: center;
  justify-content: center;
}
.tl, .tr { width: 0; height: 0; border-top: 4px solid transparent; border-bottom: 4px solid transparent; }
.tl { border-right: 4px solid #3c6cb0; }
.tr { border-left: 4px solid #3c6cb0; }
.track { background: linear-gradient(#8e8e90 0, #c8c8ca 2px, #dcdcde 60%, #d0d0d2); }
.track.left { width: 760px; }
.track.right { flex: 1; }
.thumb {
  width: 487px;
  flex: none;
  display: flex;
  align-items: center;
  justify-content: center;
  background: linear-gradient(#1d58b4 0, #4a8ae2 35%, #3a78d6 60%, #2a64c0);
}
.grip { width: 14px; height: 9px; background: repeating-linear-gradient(90deg, #9cc0ee 0 1px, transparent 1px 3px); }

.status {
  height: 19px;
  flex: none;
  display: flex;
  align-items: stretch;
  justify-content: flex-end;
  background: #ececee;
  border-top: 1px solid #9a9a9a;
  box-sizing: border-box;
}
.chev { align-self: center; margin-right: 7px; }
.stbox {
  box-sizing: border-box;
  border-left: 2px solid #a8a8aa;
  background: #f0f0f0;
  display: flex;
  align-items: center;
  font-size: 13px;
  color: #2a2a2a;
  gap: 7px;
  padding-left: 5px;
}
.stbox b { font-weight: bold; letter-spacing: .3px; white-space: nowrap; }
.grn { color: #1f8a1f; }
.a { width: 133px; }
.c { width: 168px; }
.s { width: 192px; }

.taskbar {
  height: 30px;
  flex: none;
  display: flex;
  align-items: center;
  position: relative;
  padding-left: 57px;
  background: linear-gradient(#8a8a8a, #4e4e4e 30%, #2a2a2a 48%, #0c0c0c 52%, #141414);
  color: #e4e4e4;
}
.orb { position: absolute; left: 7px; top: -7px; }
.ql { width: 104px; flex: none; display: flex; align-items: center; gap: 5px; box-sizing: border-box; padding-left: 5px; }
.ie { width: 18px; height: 18px; display: flex; align-items: center; justify-content: center; }
.ie i { font: italic bold 21px "Liberation Serif", serif; color: #3a88e4; line-height: 16px; border-top: 2px solid #f0b030; border-radius: 50%; }
.ie.small i { font-size: 18px; }
.more { font-size: 15px; color: #eee; margin: -8px 0 0 12px; }
.task {
  width: 156px;
  height: 25px;
  margin-right: 4px;
  flex: none;
  position: relative;
  padding: 0 0 0 5px;
  box-sizing: border-box;
  display: flex;
  align-items: center;
  gap: 4px;
  font: 12.500px "Liberation Sans", Arial, sans-serif;
  color: #e8e8e8;
  background: linear-gradient(rgba(255,255,255,.16), rgba(255,255,255,.06) 48%, rgba(255,255,255,.02) 52%, rgba(255,255,255,.05));
  border: 1px solid #555;
  border-radius: 3px;
}
.task.active { background: #101010; border-color: #606060; margin-right: 5px; }
.ttri { position: absolute; right: 4px; top: 11px; border-left: 3.500px solid transparent; border-right: 3.500px solid transparent; border-top: 5px solid #eee; }
.tray { position: absolute; right: 0; top: 0; bottom: 0; width: 155px; display: flex; align-items: center; font-size: 13px; color: #d8d8d8; }
.tray .de { width: 26px; }
.tchev { font-size: 20px; font-weight: bold; margin: -3px 4px 0 2px; width: 10px; }
.t-sm { margin-left: 2px; }
.t-net { margin: 0 2px 0 12px; }
.clock { margin-left: 6px; }
</style>

<style>
html, body { margin: 0; overflow: hidden; background: #ebebed; }
</style>
